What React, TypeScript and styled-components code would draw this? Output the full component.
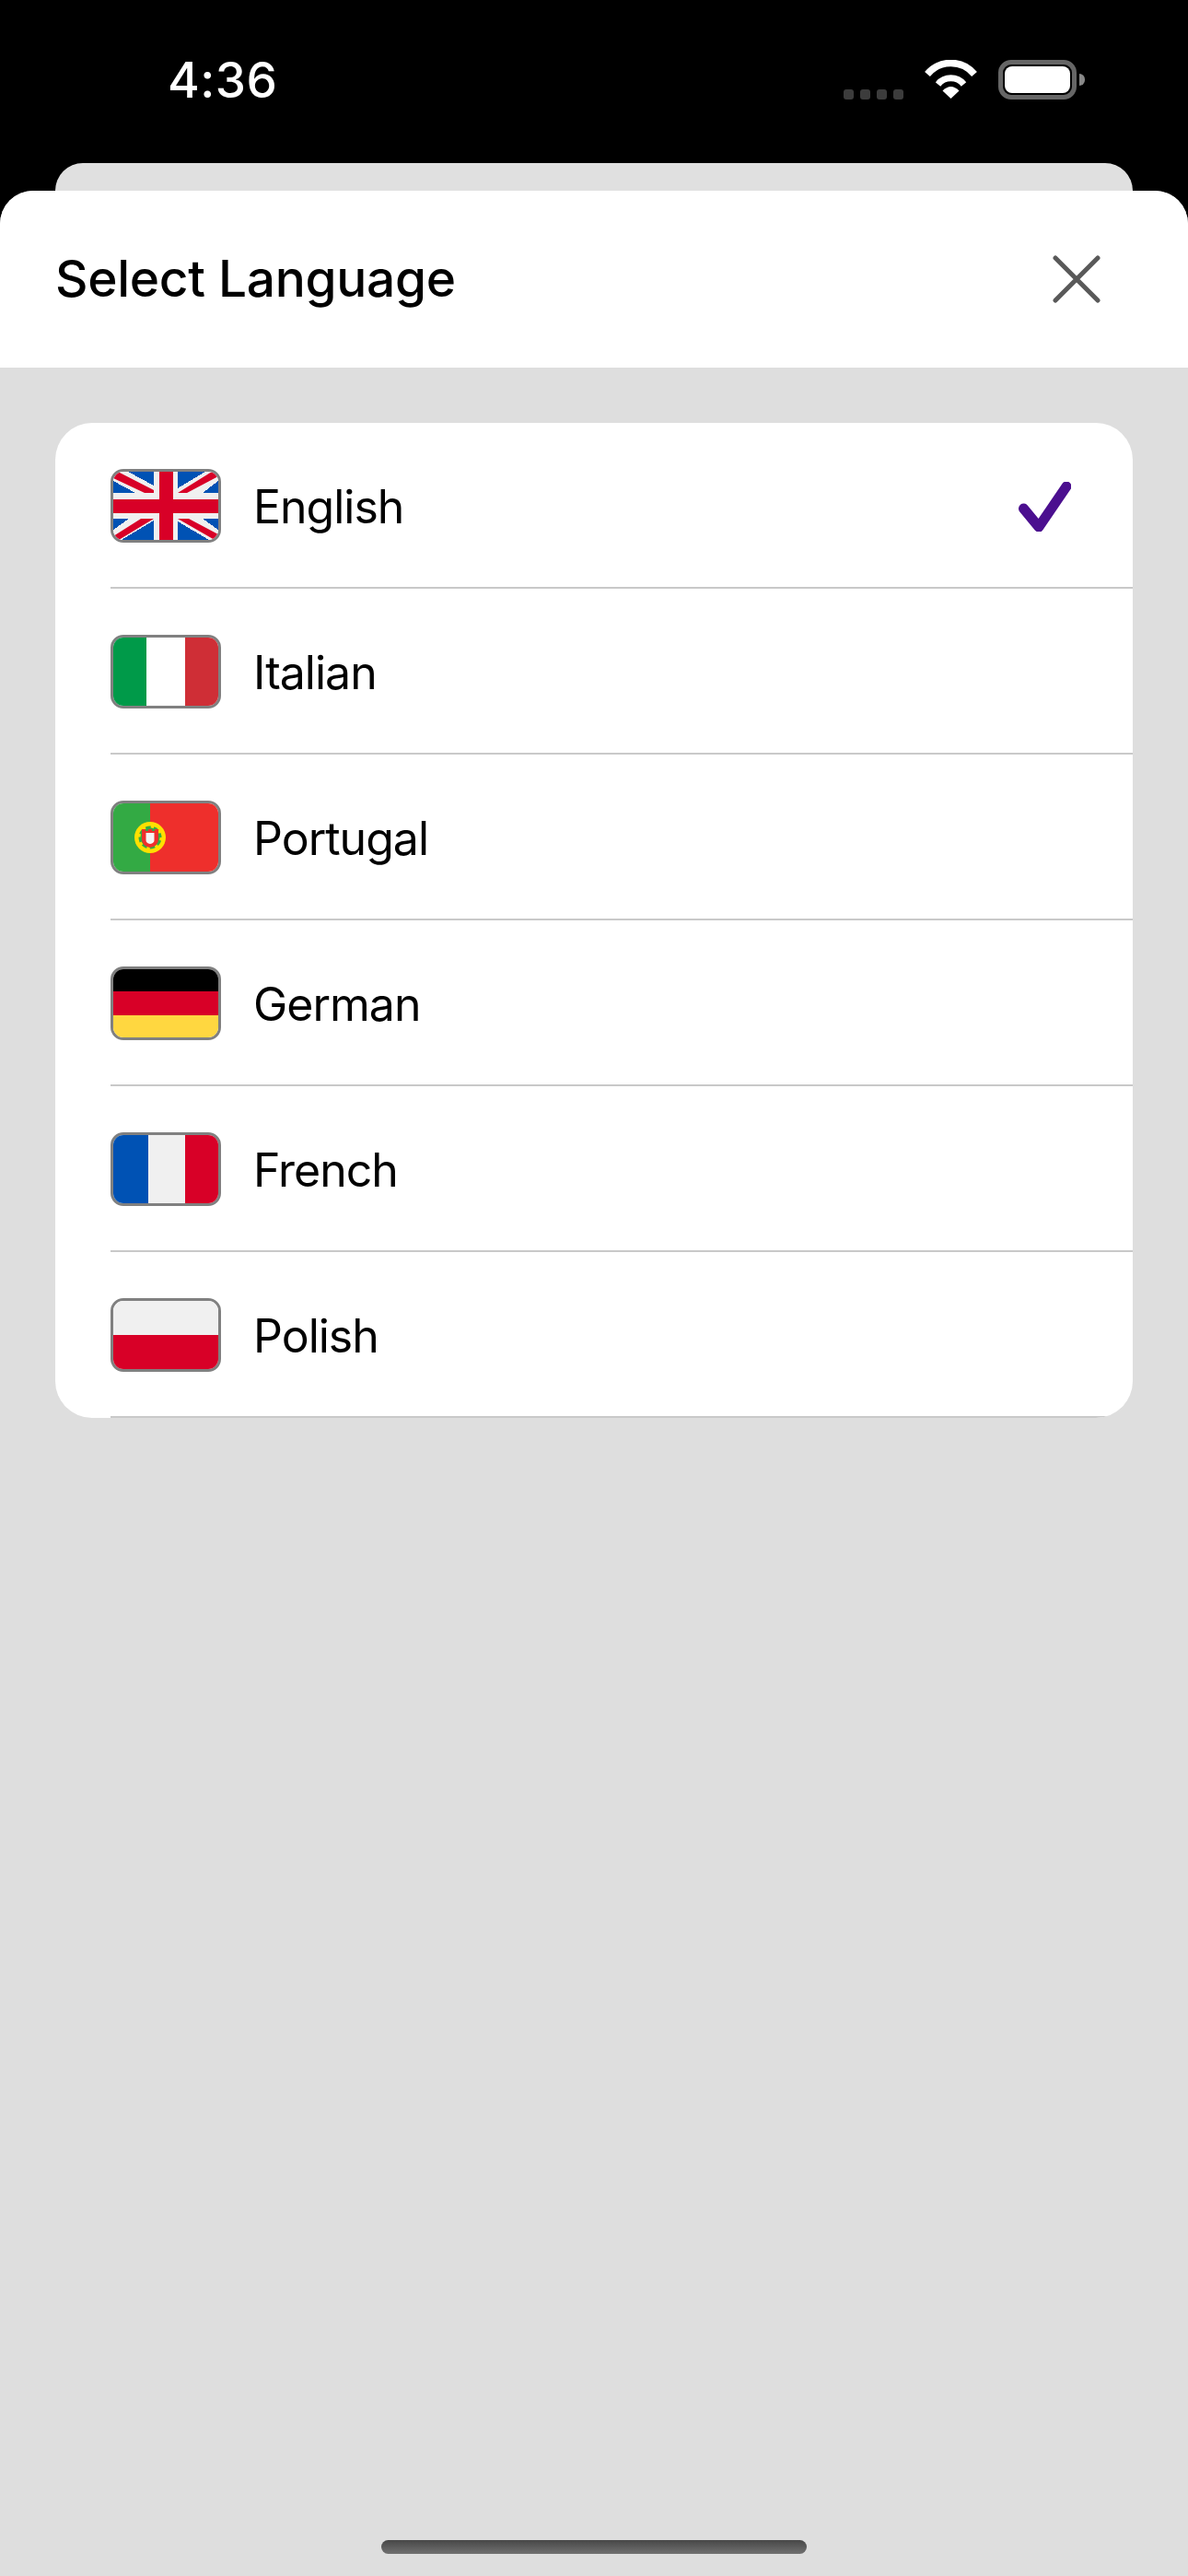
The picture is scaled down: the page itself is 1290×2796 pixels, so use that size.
import React from "react";
import styled, { createGlobalStyle } from "styled-components";

const GlobalStyle = createGlobalStyle`
  html, body {
    margin: 0;
    padding: 0;
    background: #000;
  }
`;

const Page = styled.div`
  position: relative;
  display: flex;
  flex-direction: column;
  width: 1290px;
  height: 2796px;
  overflow: hidden;
  background: #000;
  font-family: Inter, "Liberation Sans", sans-serif;
`;

const StatusBar = styled.div`
  display: flex;
  align-items: flex-start;
  justify-content: space-between;
  height: 177px;
  padding: 0 112px 0 182px;
  box-sizing: border-box;
  color: #fff;
`;

const Time = styled.div`
  margin-top: 56px;
  font-size: 53px;
  line-height: 63px;
  font-weight: 500;
  letter-spacing: 0.5px;
`;

const StatusIcons = styled.div`
  display: flex;
  align-items: flex-start;
  margin-top: 65px;
`;

const SignalDots = styled.div`
  display: flex;
  gap: 7px;
  margin-top: 32px;
  margin-right: 22px;
`;

const SignalDot = styled.span`
  width: 11px;
  height: 11px;
  border-radius: 3px;
  background: #3c3c3c;
`;

const Wifi = styled.svg`
  display: block;
  margin-right: 22px;
`;

const Battery = styled.div`
  position: relative;
  width: 85px;
  height: 43px;
  padding: 2px;
  box-sizing: border-box;
  border: 5px solid #666;
  border-radius: 14px;
  margin-right: 9px;

  &::after {
    content: "";
    position: absolute;
    top: 10px;
    right: -14px;
    width: 6px;
    height: 13px;
    border-radius: 0 7px 7px 0;
    background: #888;
  }
`;

const BatteryFill = styled.div`
  height: 100%;
  border-radius: 8px;
  background: #fff;
`;

const BackSheet = styled.div`
  flex: none;
  height: 30px;
  margin: 0 60px;
  border-radius: 30px 30px 0 0;
  background: #e0e0e0;
`;

const Sheet = styled.div`
  flex: 1;
  display: flex;
  flex-direction: column;
  border-radius: 36px 36px 0 0;
  overflow: hidden;
  background: #dedede;
`;

const SheetHeader = styled.header`
  flex: none;
  display: flex;
  align-items: center;
  justify-content: space-between;
  height: 192px;
  padding: 0 95px 0 60px;
  box-sizing: border-box;
  background: #fff;
`;

const Title = styled.h1`
  margin: -2px 0 0;
  font-size: 55px;
  line-height: 66px;
  font-weight: 500;
  letter-spacing: -0.3px;
  color: #000;
`;

const CloseIcon = styled.svg`
  display: block;
`;

const Card = styled.ul`
  margin: 60px 60px 0;
  padding: 0;
  list-style: none;
  border-radius: 40px;
  overflow: hidden;
  background: #fff;
`;

const Row = styled.li`
  display: flex;
  align-items: center;
  height: 180px;
  margin-left: 60px;
  padding-right: 67px;
  box-sizing: border-box;
  border-bottom: 2px solid #c9c9c9;
`;

const FlagFrame = styled.div`
  flex: none;
  width: 120px;
  height: 80px;
  margin-top: 2px;
  box-sizing: border-box;
  border: 3px solid #808080;
  border-radius: 14px;
  overflow: hidden;

  svg {
    display: block;
  }
`;

const Label = styled.span`
  flex: 1;
  margin: 3px 0 0 35px;
  font-size: 50px;
  line-height: 60px;
  letter-spacing: -1px;
  color: #000;
`;

const CheckIcon = styled.svg`
  display: block;
  margin-top: 4px;
`;

const HomeIndicator = styled.div`
  position: absolute;
  left: 414px;
  bottom: 24px;
  width: 462px;
  height: 15px;
  border-radius: 8px;
  background: linear-gradient(#474747, #717171);
`;

const FlagSvg = ({ children }: { children: React.ReactNode }) => (
  <svg width="114" height="74" viewBox="0 0 114 74" shapeRendering="crispEdges">
    {children}
  </svg>
);

const BLUE = "#0052b4";
const RED = "#d80027";
const PALE = "#f0f0f0";

const UkFlag = () => (
  <FlagSvg>
    <rect width="114" height="74" fill={PALE} />
    <path
      fill={BLUE}
      d="M16 0H44V15ZM0 10V23H24ZM70 0H100L70 18ZM114 10V23H97ZM0 51H17L0 63ZM44 53V74H9ZM70 54L104 74H70ZM97 51H114V63Z"
    />
    <g shapeRendering="auto">
      <path
        fill={RED}
        d="M0 2L5 0L44 20V23H34L0 7ZM70 23L107 0H114V5L80 23ZM30 51H44L6 74H0V70ZM70 51H82L114 68V72L110 74Z"
      />
    </g>
    <rect x="50" width="14.5" height="74" fill={RED} />
    <rect y="29.5" width="114" height="15" fill={RED} />
  </FlagSvg>
);

const ItalyFlag = () => (
  <FlagSvg>
    <rect width="36" height="74" fill="#009a49" />
    <rect x="36" width="42" height="74" fill="#fff" />
    <rect x="78" width="36" height="74" fill="#cf2e36" />
  </FlagSvg>
);

const PortugalFlag = () => (
  <FlagSvg>
    <rect width="40" height="74" fill="#33aa44" />
    <rect x="40" width="74" height="74" fill="#ee2f2c" />
    <g shapeRendering="auto">
      <circle cx="40" cy="37" r="17" fill="#ffe000" />
      <circle cx="40" cy="37" r="12.5" fill="#33aa44" />
      <circle
        cx="40"
        cy="37"
        r="12"
        fill="none"
        stroke="#ffe000"
        strokeWidth="3"
        strokeDasharray="3.5 6"
      />
      <path
        d="M31 28H35V30H38V28H42V30H45V28H49V39Q49 46 40 48Q31 46 31 39Z"
        fill="#ee2f2c"
      />
      <path d="M35.5 32H44.5V40Q44.5 43 40 44Q35.5 43 35.5 40Z" fill="#f4f4f4" />
    </g>
  </FlagSvg>
);

const GermanyFlag = () => (
  <FlagSvg>
    <rect width="114" height="23.5" fill="#000" />
    <rect y="23.5" width="114" height="26.5" fill={RED} />
    <rect y="50" width="114" height="24" fill="#ffd740" />
  </FlagSvg>
);

const FranceFlag = () => (
  <FlagSvg>
    <rect width="37.5" height="74" fill={BLUE} />
    <rect x="37.5" width="40.5" height="74" fill={PALE} />
    <rect x="78" width="36" height="74" fill={RED} />
  </FlagSvg>
);

const PolandFlag = () => (
  <FlagSvg>
    <rect width="114" height="37" fill={PALE} />
    <rect y="37" width="114" height="37" fill={RED} />
  </FlagSvg>
);

const languages = [
  { name: "English", Flag: UkFlag, selected: true },
  { name: "Italian", Flag: ItalyFlag },
  { name: "Portugal", Flag: PortugalFlag },
  { name: "German", Flag: GermanyFlag },
  { name: "French", Flag: FranceFlag },
  { name: "Polish", Flag: PolandFlag },
];

const App = () => {
  return (
    <Page>
      <GlobalStyle />
      <StatusBar>
        <Time>4:36</Time>
        <StatusIcons>
          <SignalDots>
            <SignalDot />
            <SignalDot />
            <SignalDot />
            <SignalDot />
          </SignalDots>
          <Wifi width="59" height="42" viewBox="0 0 59 42" fill="none">
            <path d="M4 15.5A33 33 0 0 1 55 15.5" stroke="#fff" strokeWidth="7.5" />
            <path d="M15.5 26.5A18 18 0 0 1 43.5 26.5" stroke="#fff" strokeWidth="7" />
            <path d="M20.5 33.5Q29.5 24.5 38.5 33.5L29.5 42Z" fill="#fff" />
          </Wifi>
          <Battery>
            <BatteryFill />
          </Battery>
        </StatusIcons>
      </StatusBar>
      <BackSheet />
      <Sheet>
        <SheetHeader>
          <Title>Select Language</Title>
          <CloseIcon width="52" height="52" viewBox="0 0 52 52" fill="none">
            <path
              d="M3 3L49 49M49 3L3 49"
              stroke="#595959"
              strokeWidth="5"
              strokeLinecap="round"
            />
          </CloseIcon>
        </SheetHeader>
        <Card>
          {languages.map(({ name, Flag, selected }) => (
            <Row key={name}>
              <FlagFrame>
                <Flag />
              </FlagFrame>
              <Label>{name}</Label>
              {selected && (
                <CheckIcon width="57" height="54" viewBox="0 0 57 54" fill="none">
                  <path
                    d="M5.5 29L22 49L52 5"
                    stroke="#4b0f8f"
                    strokeWidth="11"
                    strokeLinecap="round"
                    strokeLinejoin="round"
                  />
                </CheckIcon>
              )}
            </Row>
          ))}
        </Card>
      </Sheet>
      <HomeIndicator />
    </Page>
  );
};

export default App;
